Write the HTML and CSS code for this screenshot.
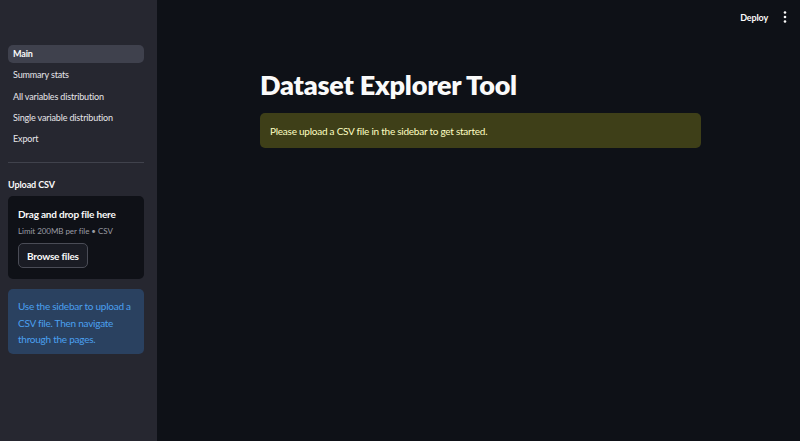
FILE: index.html
```html
<!DOCTYPE html>
<html>
<head>
<meta charset="utf-8">
<link rel="stylesheet" href="styles.css">
</head>
<body>
<div class="app">
  <aside class="sidebar">
    <nav class="nav">
      <a class="nav-item active">Main</a>
      <a class="nav-item">Summary stats</a>
      <a class="nav-item">All variables distribution</a>
      <a class="nav-item">Single variable distribution</a>
      <a class="nav-item">Export</a>
    </nav>
    <div class="divider"></div>
    <div class="upload-label">Upload CSV</div>
    <div class="dropzone">
      <div class="dz-title">Drag and drop file here</div>
      <div class="dz-sub">Limit 200MB per file • CSV</div>
      <button class="browse">Browse files</button>
    </div>
    <div class="info">Use the sidebar to upload a CSV file. Then navigate through the pages.</div>
  </aside>
  <main class="main">
    <header class="topbar">
      <span class="deploy">Deploy</span>
      <svg class="menu" width="4" height="12" viewBox="0 0 4 12"><circle cx="2" cy="1.5" r="1.3" fill="#fafafa"/><circle cx="2" cy="6" r="1.3" fill="#fafafa"/><circle cx="2" cy="10.5" r="1.3" fill="#fafafa"/></svg>
    </header>
    <section class="content">
      <h1 class="title">Dataset Explorer Tool</h1>
      <div class="warning">Please upload a CSV file in the sidebar to get started.</div>
    </section>
  </main>
</div>
</body>
</html>
```
FILE: styles.css
```css
* { box-sizing: border-box; }
html, body { margin: 0; padding: 0; height: 100%; }
body {
  font-family: Lato, "Noto Sans", sans-serif;
  background: #0e1117;
  color: #fafafa;
}
.app { display: flex; height: 441px; }
.sidebar {
  width: 157px;
  flex: none;
  background: #262730;
  padding: 45px 13px 0 8px;
  display: flex;
  flex-direction: column;
}
.nav { display: flex; flex-direction: column; gap: 3.3px; }
.nav-item {
  display: block;
  height: 18px;
  line-height: 18px;
  padding: 0 5px;
  font-size: 9px;
  letter-spacing: -0.15px;
  color: #e6e6ea;
  border-radius: 5px;
}
.nav-item.active { background: #3f414d; font-weight: 700; color: #fafafa; }
.divider { height: 1px; background: #40424c; margin: 14px 0 0; }
.upload-label { font-size: 9px; font-weight: 700; margin-top: 16px; height: 14px; letter-spacing: -0.1px; }
.dropzone {
  margin-top: 3px;
  background: #0f1117;
  border-radius: 5px;
  padding: 12px 10px 10px;
  height: 83px;
}
.dz-title { font-size: 10px; font-weight: 700; line-height: 13px; letter-spacing: -0.2px; }
.dz-sub { font-size: 8px; color: #9a9ca4; margin-top: 5px; line-height: 11px; letter-spacing: -0.05px; }
.browse {
  margin-top: 6px;
  height: 25px;
  padding: 0 8px;
  font-family: inherit;
  font-size: 10px;
  font-weight: 700;
  letter-spacing: -0.2px;
  color: #fafafa;
  background: #1a1c24;
  border: 1px solid #4a4c56;
  border-radius: 5px;
}
.info {
  margin-top: 10px;
  background: #2a4160;
  color: #4aa0f0;
  border-radius: 5px;
  padding: 9px 10px;
  font-size: 10px;
  letter-spacing: -0.25px;
  line-height: 16.5px;
  height: 65px;
}
.main { flex: 1; display: flex; flex-direction: column; }
.topbar {
  height: 34px;
  display: flex;
  align-items: center;
  justify-content: flex-end;
  gap: 15px;
  padding-right: 13px;
}
.deploy { font-size: 9px; font-weight: 700; letter-spacing: -0.15px; }
.content { padding: 36px 0 0 103px; width: 544px; }
.title { margin: 0; font-size: 27px; font-weight: 800; line-height: 30px; height: 43px; letter-spacing: -0.2px; }
.warning {
  background: #3e3f18;
  color: #ffffc2;
  border-radius: 5px;
  height: 35px;
  padding: 0 10px;
  display: flex;
  align-items: center;
  font-size: 10px;
  letter-spacing: -0.25px;
}
```
